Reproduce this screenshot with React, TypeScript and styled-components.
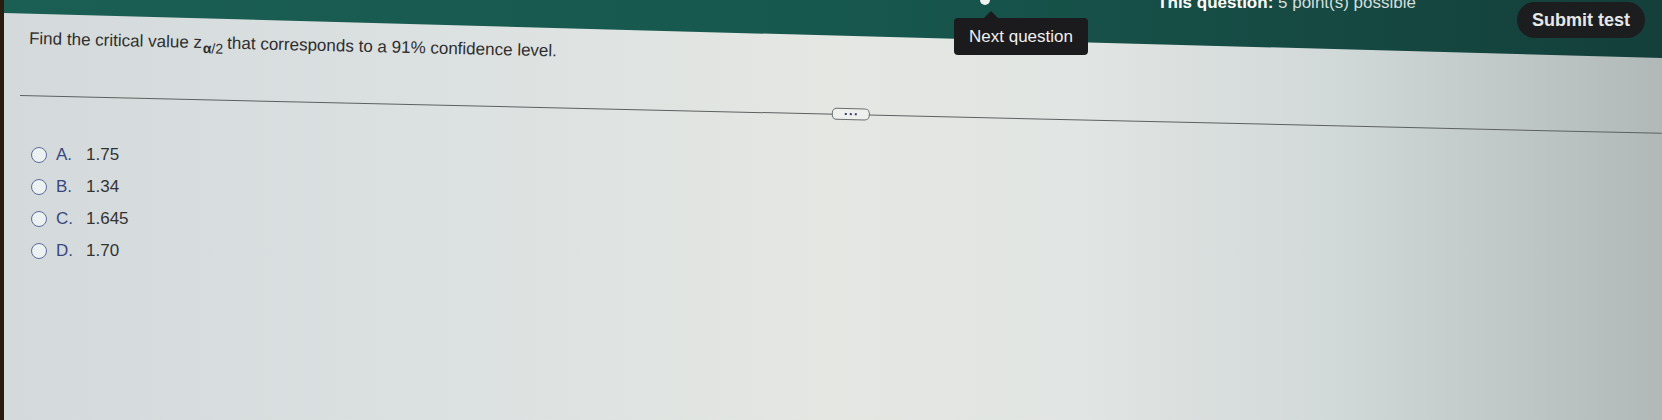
import React from "react";
import styled, { createGlobalStyle } from "styled-components";

const GlobalStyle = createGlobalStyle`
  html, body {
    margin: 0;
    padding: 0;
    background: #1a4f47;
  }
  body {
    font-family: "Liberation Sans", Arial, sans-serif;
  }
`;

const Page = styled.div`
  position: relative;
  width: 1662px;
  height: 420px;
  overflow: hidden;
  box-sizing: border-box;
  border-left: 4px solid #2b1a0e;
  background: linear-gradient(
    90deg,
    #d4dadb 0%,
    #dbe0e1 25%,
    #e4e7e2 50%,
    #e1e5e3 65%,
    #d2d9d9 80%,
    #b1b9b8 100%
  );

  &::before {
    content: "";
    position: absolute;
    top: 0;
    left: 0;
    right: 0;
    height: 60px;
    background: linear-gradient(90deg, #1b5e54 0%, #17584e 50%, #143f3a 100%);
    clip-path: polygon(0 0, 100% 0, 100% 58px, 0 13px);
  }
`;

const Content = styled.div`
  position: relative;
  display: flex;
  flex-direction: column;
`;

const TopRow = styled.div`
  display: flex;
  align-items: flex-start;
  padding-left: 25px;
  padding-right: 17px;
`;

const Question = styled.p`
  margin: 29px 0 0;
  font-size: 17px;
  line-height: 20px;
  color: #2e2e2e;
  transform-origin: left center;
  transform: rotate(1.35deg);
`;

const Sub = styled.span`
  font-size: 14px;
  vertical-align: -5px;
  margin-left: 1px;
  margin-right: 4px;
  i {
    font-style: normal;
    font-weight: bold;
  }
`;

const Points = styled.div`
  margin-left: auto;
  margin-top: -6px;
  font-size: 17px;
  line-height: 18px;
  color: #d3dedb;
  b {
    color: #ffffff;
  }
`;

const SubmitButton = styled.button`
  margin-left: 101px;
  margin-top: 2px;
  height: 36px;
  padding: 0 15px;
  border: none;
  border-radius: 18px;
  background: #1c1d1e;
  color: #e6e8e8;
  font-family: inherit;
  font-size: 18px;
  font-weight: bold;
`;

const Tooltip = styled.div`
  position: absolute;
  left: 950px;
  top: 18px;
  width: 134px;
  height: 37px;
  box-sizing: border-box;
  display: flex;
  align-items: center;
  justify-content: center;
  background: #1b1a1c;
  border-radius: 4px;
  color: #f0f0f0;
  font-size: 17px;

  &::before {
    content: "";
    position: absolute;
    top: -7px;
    left: 30px;
    border-left: 7px solid transparent;
    border-right: 7px solid transparent;
    border-bottom: 7px solid #1b1a1c;
  }
`;

const Knob = styled.span`
  position: absolute;
  left: 976px;
  top: -5px;
  width: 10px;
  height: 10px;
  border-radius: 50%;
  background: #f2f2f2;
`;

const Divider = styled.div`
  position: relative;
  margin: 41px 0 0 16px;
  width: 1642px;
  height: 1px;
  background: #5c6060;
  transform-origin: left center;
  transform: rotate(1.32deg);
`;

const MorePill = styled.span`
  position: absolute;
  left: 812px;
  top: -6px;
  width: 38px;
  height: 12px;
  box-sizing: border-box;
  border: 1px solid #6a6e6e;
  border-radius: 5px;
  background: #eef0ee;
  display: flex;
  align-items: center;
  justify-content: center;
  gap: 3px;

  i {
    width: 2px;
    height: 2px;
    background: #3a3d66;
  }
`;

const Options = styled.ul`
  list-style: none;
  margin: 49px 0 0;
  padding: 0 0 0 27px;
  display: flex;
  flex-direction: column;
  gap: 12px;
`;

const Option = styled.li`
  display: flex;
  align-items: center;
  height: 20px;
  font-size: 17px;
  color: #333;
`;

const Radio = styled.span`
  width: 16px;
  height: 16px;
  box-sizing: border-box;
  border: 1.5px solid #5b6c9c;
  border-radius: 50%;
  background: #eef1f2;
  margin-right: 9px;
`;

const Letter = styled.span`
  width: 30px;
  color: #37477f;
`;

const options = [
  { letter: "A.", value: "1.75" },
  { letter: "B.", value: "1.34" },
  { letter: "C.", value: "1.645" },
  { letter: "D.", value: "1.70" },
];

export default function App() {
  return (
    <Page>
      <GlobalStyle />
      <Content>
        <TopRow>
          <Question>
            Find the critical value z
            <Sub>
              <i>α</i>/2
            </Sub>
            that corresponds to a 91% confidence level.
          </Question>
          <Points>
            <b>This question:</b> 5 point(s) possible
          </Points>
          <SubmitButton>Submit test</SubmitButton>
        </TopRow>
        <Knob />
        <Tooltip>Next question</Tooltip>
        <Divider>
          <MorePill>
            <i />
            <i />
            <i />
          </MorePill>
        </Divider>
        <Options>
          {options.map((o) => (
            <Option key={o.letter}>
              <Radio />
              <Letter>{o.letter}</Letter>
              {o.value}
            </Option>
          ))}
        </Options>
      </Content>
    </Page>
  );
}
